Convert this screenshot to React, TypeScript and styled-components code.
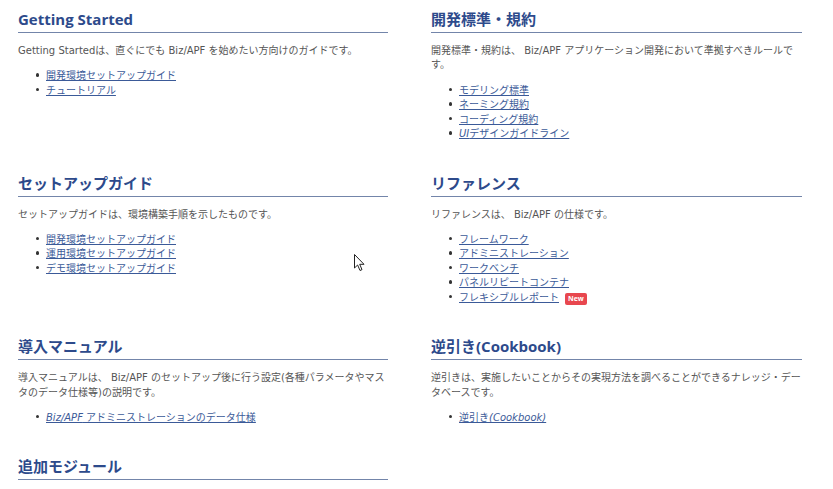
import React from 'react'
import styled, { createGlobalStyle } from 'styled-components'

const GlobalStyle = createGlobalStyle`
    html, body {
        margin: 0;
        padding: 0;
        background: #fff;
    }
    body {
        font-family: 'DejaVu Sans', 'Noto Sans CJK JP', sans-serif;
        color: #555;
    }
`

const Page = styled.div`
    position: relative;
    width: 833px;
    height: 489px;
    overflow: hidden;
    box-sizing: border-box;
    padding: 9px 0 0 18px;
`

const Grid = styled.div`
    display: grid;
    grid-template-columns: 370px 371px;
    column-gap: 43px;
    row-gap: 31px;
    align-items: start;
`

const Section = styled.section`
    display: flex;
    flex-direction: column;
`

const Heading = styled.h2`
    margin: 0;
    font-family: 'Open Sans', 'Noto Sans CJK JP', sans-serif;
    font-size: 15px;
    font-weight: 700;
    line-height: 20px;
    color: #2d4a8b;
    padding-bottom: 3px;
    border-bottom: 1px solid #7385aa;
`

const Description = styled.p`
    margin: 11px 0 0;
    font-size: 10px;
    line-height: 14.3px;
    color: #555;
`

const LinkList = styled.ul`
    list-style: none;
    margin: 11px 0 0;
    padding: 0;
`

const Item = styled.li`
    position: relative;
    padding-left: 28px;
    font-size: 10px;
    line-height: 14.5px;
    height: 14.5px;
    display: flex;
    align-items: center;

    &::before {
        content: '';
        position: absolute;
        left: 17.5px;
        top: 4px;
        width: 3.5px;
        height: 3.5px;
        border-radius: 50%;
        background: #333;
    }
`

const Link = styled.a`
    color: #3b5a98;
    text-decoration: underline;
    text-underline-offset: 1px;
`

const NewBadge = styled.span`
    position: relative;
    top: 1px;
    margin-left: 6px;
    background: #e8474f;
    color: #fff;
    font-family: 'Open Sans', sans-serif;
    font-size: 7px;
    font-weight: 700;
    line-height: 12px;
    padding: 0 3px;
    border-radius: 2px;
`

const Cursor = styled.svg`
    position: absolute;
    left: 354px;
    top: 254px;
`

type LinkItem = { label: React.ReactNode; isNew?: boolean }
type SectionData = { title: string; description: string; links: LinkItem[] }

const sections: SectionData[] = [
    {
        title: 'Getting Started',
        description: 'Getting Startedは、直ぐにでも Biz/APF を始めたい方向けのガイドです。',
        links: [{ label: '開発環境セットアップガイド' }, { label: 'チュートリアル' }],
    },
    {
        title: '開発標準・規約',
        description: '開発標準・規約は、 Biz/APF アプリケーション開発において準拠すべきルールです。',
        links: [
            { label: 'モデリング標準' },
            { label: 'ネーミング規約' },
            { label: 'コーディング規約' },
            {
                label: (
                    <>
                        <i>UI</i>デザインガイドライン
                    </>
                ),
            },
        ],
    },
    {
        title: 'セットアップガイド',
        description: 'セットアップガイドは、環境構築手順を示したものです。',
        links: [
            { label: '開発環境セットアップガイド' },
            { label: '運用環境セットアップガイド' },
            { label: 'デモ環境セットアップガイド' },
        ],
    },
    {
        title: 'リファレンス',
        description: 'リファレンスは、 Biz/APF の仕様です。',
        links: [
            { label: 'フレームワーク' },
            { label: 'アドミニストレーション' },
            { label: 'ワークベンチ' },
            { label: 'パネルリピートコンテナ' },
            { label: 'フレキシブルレポート', isNew: true },
        ],
    },
    {
        title: '導入マニュアル',
        description:
            '導入マニュアルは、 Biz/APF のセットアップ後に行う設定(各種パラメータやマスタのデータ仕様等)の説明です。',
        links: [
            {
                label: (
                    <>
                        <i>Biz/APF</i> アドミニストレーションのデータ仕様
                    </>
                ),
            },
        ],
    },
    {
        title: '逆引き(Cookbook)',
        description: '逆引きは、実施したいことからその実現方法を調べることができるナレッジ・データベースです。',
        links: [
            {
                label: (
                    <>
                        逆引き<i>(Cookbook)</i>
                    </>
                ),
            },
        ],
    },
]

export default function App() {
    return (
        <Page>
            <GlobalStyle />
            <Grid>
                {sections.map((s) => (
                    <Section key={s.title}>
                        <Heading>{s.title}</Heading>
                        <Description>{s.description}</Description>
                        <LinkList>
                            {s.links.map((l, i) => (
                                <Item key={i}>
                                    <Link href="#">{l.label}</Link>
                                    {l.isNew && <NewBadge>New</NewBadge>}
                                </Item>
                            ))}
                        </LinkList>
                    </Section>
                ))}
                <Section>
                    <Heading>追加モジュール</Heading>
                </Section>
            </Grid>
            <Cursor width="12" height="18" viewBox="0 0 12 18">
                <path
                    d="M0.5 0.5 L0.5 14 L3.6 11 L6 16.5 L8 15.6 L5.7 10.3 L10 10.3 Z"
                    fill="#fff"
                    stroke="#222"
                    strokeWidth="1"
                    strokeLinejoin="round"
                />
            </Cursor>
        </Page>
    )
}
